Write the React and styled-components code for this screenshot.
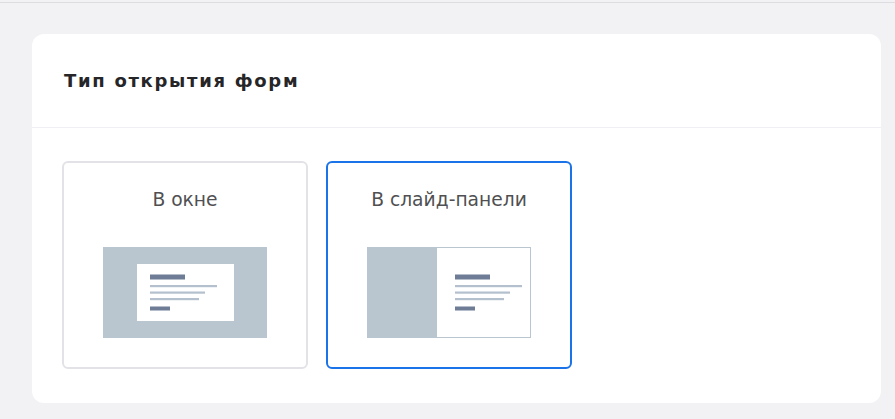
import React from "react";
import styled, { createGlobalStyle } from "styled-components";

const Global = createGlobalStyle`
  html, body { margin: 0; padding: 0; }
  body { background: #f2f1f4; font-family: "DejaVu Sans", "Noto Sans", sans-serif; }
`;

const Page = styled.div`
  min-height: 419px;
  box-sizing: border-box;
  border-top: 2px solid #f2f1f4;
  padding: 32px 14px 16px 32px;
  position: relative;
  &::before {
    content: "";
    position: absolute;
    left: 0; right: 0; top: 0;
    height: 1px;
    background: #dddce1;
  }
`;

const Card = styled.section`
  background: #fff;
  border-radius: 12px;
  height: 369px;
  display: flex;
  flex-direction: column;
`;

const Header = styled.header`
  height: 94px;
  box-sizing: border-box;
  display: flex;
  align-items: center;
  padding: 0 32px 0;
  border-bottom: 1px solid #f0eff3;
`;

const Title = styled.h2`
  margin: 0;
  font-family: "DejaVu Sans", "Noto Sans", sans-serif;
  font-weight: 700;
  font-size: 18px;
  letter-spacing: 1.7px;
  color: #262628;
`;

const Options = styled.div`
  display: flex;
  gap: 18px;
  padding: 33px 30px;
`;

const Option = styled.button`
  width: 246px;
  height: 208px;
  box-sizing: border-box;
  border: 2px solid ${(p) => (p.$active ? "#1a73e8" : "#e3e3e7")};
  border-radius: 6px;
  background: #fff;
  display: flex;
  flex-direction: column;
  align-items: center;
  padding: 27px 0 0;
  cursor: pointer;
`;

const Label = styled.span`
  font-family: "DejaVu Sans", "Noto Sans", sans-serif;
  font-size: 18.7px;
  line-height: 20px;
  color: #505052;
  margin-bottom: 37px;
`;

const DARK = "#6e7c95";
const LIGHT = "#b4c0cd";
const GREY = "#b9c6d0";

function Lines({ x, y }) {
  return (
    <g>
      <rect x={x} y={y} width="35" height="5" fill={DARK} />
      <rect x={x} y={y + 10.5} width="67" height="2.2" fill={LIGHT} />
      <rect x={x} y={y + 17} width="55" height="2.2" fill={LIGHT} />
      <rect x={x} y={y + 23.5} width="49" height="2.2" fill={LIGHT} />
      <rect x={x} y={y + 32} width="20" height="4" fill={DARK} />
    </g>
  );
}

function WindowPreview() {
  return (
    <svg width="164" height="91" viewBox="0 0 164 91">
      <rect x="0" y="0" width="164" height="91" fill={GREY} />
      <rect x="34" y="17" width="97" height="57" fill="#fff" />
      <Lines x={47} y={27.5} />
    </svg>
  );
}

function SlidePreview() {
  return (
    <svg width="164" height="91" viewBox="0 0 164 91">
      <rect x="0.5" y="0.5" width="163" height="90" fill="#fff" stroke={GREY} />
      <rect x="0" y="0" width="70" height="91" fill={GREY} />
      <Lines x={88} y={27.5} />
    </svg>
  );
}

export default function App() {
  return (
    <>
      <Global />
      <Page>
        <Card>
          <Header>
            <Title>Тип открытия форм</Title>
          </Header>
          <Options>
            <Option>
              <Label>В окне</Label>
              <WindowPreview />
            </Option>
            <Option $active>
              <Label>В слайд-панели</Label>
              <SlidePreview />
            </Option>
          </Options>
        </Card>
      </Page>
    </>
  );
}
